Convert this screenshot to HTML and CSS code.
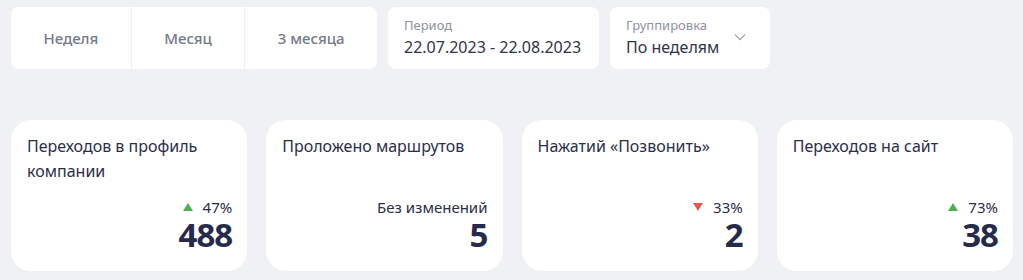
FILE: index.html
```html
<!DOCTYPE html>
<html lang="ru">
<head>
	<meta charset="UTF-8">
	<title>Статистика</title>
	<link rel="stylesheet" href="styles.css">
</head>
<body>
	<div class="filters">
		<div class="periods">
			<div class="period-btn">Неделя</div>
			<div class="period-btn">Месяц</div>
			<div class="period-btn">3 месяца</div>
		</div>
		<div class="field field-date">
			<div class="field-label">Период</div>
			<div class="field-value">22.07.2023 - 22.08.2023</div>
		</div>
		<div class="field field-group">
			<div>
				<div class="field-label">Группировка</div>
				<div class="field-value">По неделям</div>
			</div>
			<svg class="chevron" width="12" height="8" viewBox="0 0 12 8"><path d="M1 1.5 6 6.5 11 1.5" fill="none" stroke="#a3a8b5" stroke-width="1.3"/></svg>
		</div>
	</div>

	<div class="cards">
		<div class="card">
			<div class="card-title">Переходов в профиль компании</div>
			<div class="card-bottom">
				<div class="change"><span class="tri up"></span>47%</div>
				<div class="value">488</div>
			</div>
		</div>
		<div class="card">
			<div class="card-title">Проложено маршрутов</div>
			<div class="card-bottom">
				<div class="change">Без изменений</div>
				<div class="value">5</div>
			</div>
		</div>
		<div class="card">
			<div class="card-title">Нажатий «Позвонить»</div>
			<div class="card-bottom">
				<div class="change"><span class="tri down"></span>33%</div>
				<div class="value">2</div>
			</div>
		</div>
		<div class="card">
			<div class="card-title">Переходов на сайт</div>
			<div class="card-bottom">
				<div class="change"><span class="tri up"></span>73%</div>
				<div class="value">38</div>
			</div>
		</div>
	</div>
</body>
</html>
```

FILE: styles.css
```css
*{ margin:0; padding:0; box-sizing:border-box;}
body{ background:#f0f1f5; font-family:"Noto Sans","Liberation Sans",sans-serif; color:#2b2e48; padding:7px 10px 0 11px;}

.filters{ display:flex; gap:10px; height:62px;}
.periods{ display:flex; width:366px; background:#fff; border-radius:8px; overflow:hidden;}
.period-btn{ flex:auto; display:flex; align-items:center; justify-content:center; padding:0 32px; font-size:15px; font-weight:500; color:#737a8c; border-left:1.5px solid #eef0f4;}
.period-btn:first-child{ border-left:0;}
.field{ background:#fff; border-radius:8px; padding:9px 16px 0 16px;}
.field-date{ width:211px; margin-left:1px;}
.field-group{ width:160px; display:flex; justify-content:space-between; align-items:center; padding-top:0; margin-left:1px;}
.field-label{ font-size:13px; color:#8d92a0; line-height:18px;}
.field-value{ font-size:16px; color:#30334a; line-height:26px;}
.chevron{ margin-right:8px; margin-top:-2px;}

.cards{ display:grid; grid-template-columns:repeat(4,1fr); gap:19px; margin-top:51px;}
.card{ background:#fff; border-radius:20px; height:151px; padding:14px 15px 18px 16px; display:flex; flex-direction:column; justify-content:space-between;}
.card-title{ font-size:16px; line-height:25px; color:#2b2e48;}
.card-bottom{ text-align:right;}
.change{ font-size:15px; line-height:20px; color:#2b2e48;}
.tri{ display:inline-block; vertical-align:2px; width:0; height:0; border-left:5px solid transparent; border-right:5px solid transparent; margin-right:10px;}
.tri.up{ border-bottom:8px solid #4caf50;}
.tri.down{ border-top:8px solid #e35a4f;}
.value{ font-size:33px; font-weight:700; letter-spacing:-1px; line-height:36px; color:#262a4b;}
```
